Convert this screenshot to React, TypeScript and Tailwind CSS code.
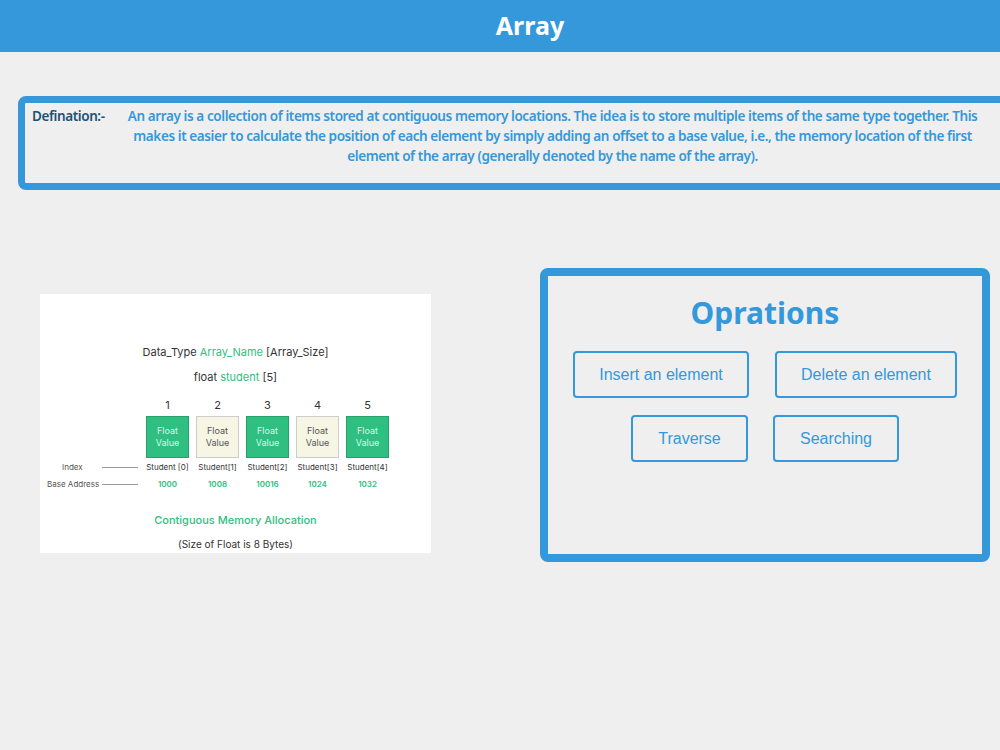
import React from 'react';

const cols = [
  { n: '1', green: true, label: 'Student [0]', addr: '1000' },
  { n: '2', green: false, label: 'Student[1]', addr: '1008' },
  { n: '3', green: true, label: 'Student[2]', addr: '10016' },
  { n: '4', green: false, label: 'Student[3]', addr: '1024' },
  { n: '5', green: true, label: 'Student[4]', addr: '1032' },
];

function Diagram() {
  return (
    <div className="w-[391px] h-[259px] bg-white flex flex-col items-center text-[#333]" style={{ fontFamily: 'Inter, "Noto Sans", sans-serif' }}>
      <div className="mt-[50px] text-[11px]">
        Data_Type <span className="text-[#2fbf80]">Array_Name</span> [Array_Size]
      </div>
      <div className="mt-[8px] text-[11px]">
        float <span className="text-[#2fbf80]">student</span> [5]
      </div>
      <div className="mt-[12px] flex w-full">
        <div className="w-[106px] shrink-0 flex flex-col justify-end text-[8px] text-[#555]">
          <div className="flex items-center h-[18px]">
            <span className="ml-[22px] w-[40px]">Index</span>
            <span className="h-px w-[36px] bg-[#999]" />
          </div>
          <div className="flex items-center h-[16px]">
            <span className="ml-[7px] w-[55px]">Base Address</span>
            <span className="h-px w-[36px] bg-[#999]" />
          </div>
        </div>
        <div className="flex gap-[7px]">
          {cols.map((c) => (
            <div key={c.n} className="w-[43px] flex flex-col items-center">
              <div className="text-[11px] h-[19px]">{c.n}</div>
              <div
                className={`w-[43px] h-[42px] flex flex-col items-center justify-center text-[9px] leading-[12px] border ${
                  c.green ? 'bg-[#2fbf80] text-[#dff5ea] border-[#27a06b]' : 'bg-[#f7f5e4] text-[#555] border-[#ccc]'
                }`}
              >
                <span>Float</span>
                <span>Value</span>
              </div>
              <div className="h-[18px] flex items-center text-[8px] whitespace-nowrap">{c.label}</div>
              <div className="h-[16px] flex items-center text-[8px] text-[#2fbf80] font-semibold">{c.addr}</div>
            </div>
          ))}
        </div>
      </div>
      <div className="mt-[20px] text-[11px] text-[#2fbf80] font-medium">Contiguous Memory Allocation</div>
      <div className="mt-[8px] text-[10px]">(Size of Float is 8 Bytes)</div>
    </div>
  );
}

export default function App() {
  const btn = 'border-2 border-[#3498db] rounded-[4px] text-[#3498db] text-[16px] flex items-center justify-center';
  return (
    <div className="w-[1000px] h-[750px] bg-[#efefef] overflow-hidden" style={{ fontFamily: '"Noto Sans", sans-serif' }}>
      <header className="h-[52px] bg-[#3498db] flex items-center justify-center pl-[60px]">
        <h1 className="text-white text-[25px] font-bold">Array</h1>
      </header>
      <div className="ml-[18px] mt-[44px] w-[1000px] h-[94px] border-[7px] border-[#3498db] rounded-[8px] pt-[3px]">
        <div className="flex">
          <span className="shrink-0 ml-[7px] mr-[8px] text-[13.5px] font-semibold leading-[20px] text-[#1a5276] tracking-[-0.4px]">Defination:-</span>
          <p className="w-[880px] shrink-0 text-[13.5px] font-semibold leading-[20px] text-[#3498db] text-center tracking-[-0.4px]">
            An array is a collection of items stored at contiguous memory locations. The idea is to store multiple items of the same type together. This makes it easier to calculate the position of each element by simply adding an offset to a base value, i.e., the memory location of the first element of the array (generally denoted by the name of the array).
          </p>
        </div>
      </div>
      <div className="flex mt-[78px]">
        <div className="ml-[40px] mt-[26px]">
          <Diagram />
        </div>
        <div className="ml-[109px] w-[450px] h-[294px] border-[8px] border-[#3498db] rounded-[8px] flex flex-col items-center" style={{ fontFamily: '"Liberation Sans", Arial, sans-serif' }}>
          <h2 className="mt-[14px] text-[30px] font-bold text-[#3498db]" style={{ fontFamily: '"Noto Sans", sans-serif' }}>Oprations</h2>
          <div className="mt-[16px] flex gap-[26px]">
            <div className={`${btn} w-[176px] h-[47px]`}>Insert an element</div>
            <div className={`${btn} w-[182px] h-[47px]`}>Delete an element</div>
          </div>
          <div className="mt-[17px] flex gap-[25px]">
            <div className={`${btn} w-[117px] h-[47px]`}>Traverse</div>
            <div className={`${btn} w-[126px] h-[47px]`}>Searching</div>
          </div>
        </div>
      </div>
    </div>
  );
}
